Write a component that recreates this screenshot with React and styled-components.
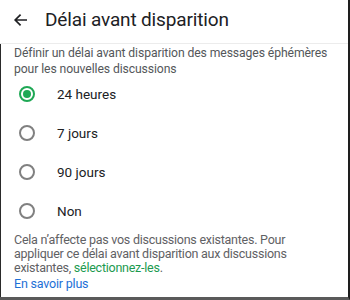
import styled, { createGlobalStyle } from "styled-components";

const GlobalStyle = createGlobalStyle`
  html, body {
    margin: 0;
    padding: 0;
    background: #ffffff;
  }
  body {
    font-family: Roboto, "Noto Sans", sans-serif;
  }
`;

const options = ["24 heures", "7 jours", "90 jours", "Non"];

export default function App() {
  return (
    <>
      <GlobalStyle />
      <Screen>
        <Header>
          <BackButton>
            <svg width="16" height="16" viewBox="0 0 16 16">
              <path
                d="M14 8H2.6M7.6 2.6L2.2 8l5.4 5.4"
                fill="none"
                stroke="#202124"
                strokeWidth="1.7"
              />
            </svg>
          </BackButton>
          <Title>Délai avant disparition</Title>
        </Header>
        <Body>
          <Intro>
            Définir un délai avant disparition des messages éphémères pour les
            nouvelles discussions
          </Intro>
          <OptionList>
            {options.map((label, i) => (
              <Option key={label}>
                <Radio checked={i === 0} />
                <OptionLabel>{label}</OptionLabel>
              </Option>
            ))}
          </OptionList>
          <Note>
            Cela n’affecte pas vos discussions existantes. Pour appliquer ce
            délai avant disparition aux discussions existantes,{" "}
            <GreenLink>sélectionnez-les</GreenLink>.
          </Note>
          <LearnMore>En savoir plus</LearnMore>
        </Body>
      </Screen>
    </>
  );
}

const Screen = styled.div`
  width: 350px;
  height: 300px;
  box-sizing: border-box;
  display: flex;
  flex-direction: column;
  overflow: hidden;
  border-right: 2px solid #1e1e1e;
  border-bottom: 3px solid #5a5a5a;
`;

const Header = styled.div`
  height: 44px;
  display: flex;
  align-items: center;
  padding-left: 13px;
  border-bottom: 1px solid #ececec;
  box-sizing: border-box;
`;

const BackButton = styled.div`
  width: 16px;
  height: 16px;
  display: flex;
  margin-right: 16px;
  margin-top: -3px;
`;

const Title = styled.h1`
  margin: -4px 0 0;
  font-size: 19px;
  font-weight: 400;
  letter-spacing: -0.15px;
  color: #202124;
`;

const Body = styled.div`
  flex: 1;
  border-left: 1px solid #2a2a2a;
  padding: 1px 0 0 13px;
`;

const Intro = styled.p`
  margin: 0;
  font-size: 12.2px;
  letter-spacing: -0.1px;
  line-height: 16px;
  color: #54575a;
  width: 330px;
`;

const OptionList = styled.div`
  display: flex;
  flex-direction: column;
  margin-top: -3px;
`;

const Option = styled.div`
  height: 39px;
  display: flex;
  align-items: center;
`;

const Radio = styled.span`
  width: 16px;
  height: 16px;
  box-sizing: border-box;
  border-radius: 50%;
  border: 2px solid ${(p) => (p.checked ? "#1fa855" : "#808080")};
  margin-left: 5px;
  margin-right: 22px;
  display: flex;
  align-items: center;
  justify-content: center;

  &::after {
    content: "";
    width: 8px;
    height: 8px;
    border-radius: 50%;
    background: ${(p) => (p.checked ? "#1fa855" : "transparent")};
  }
`;

const OptionLabel = styled.span`
  font-size: 13.5px;
  color: #202124;
`;

const Note = styled.p`
  margin: 3px 0 0;
  font-size: 12.5px;
  letter-spacing: -0.25px;
  line-height: 14px;
  color: #5f6164;
  width: 292px;
`;

const GreenLink = styled.span`
  display: inline-block;
  line-height: 14px;
  color: #1c9a4f;
`;

const LearnMore = styled.div`
  margin-top: 2px;
  font-size: 12.5px;
  letter-spacing: -0.2px;
  line-height: 14px;
  color: #1d6fd6;
`;
